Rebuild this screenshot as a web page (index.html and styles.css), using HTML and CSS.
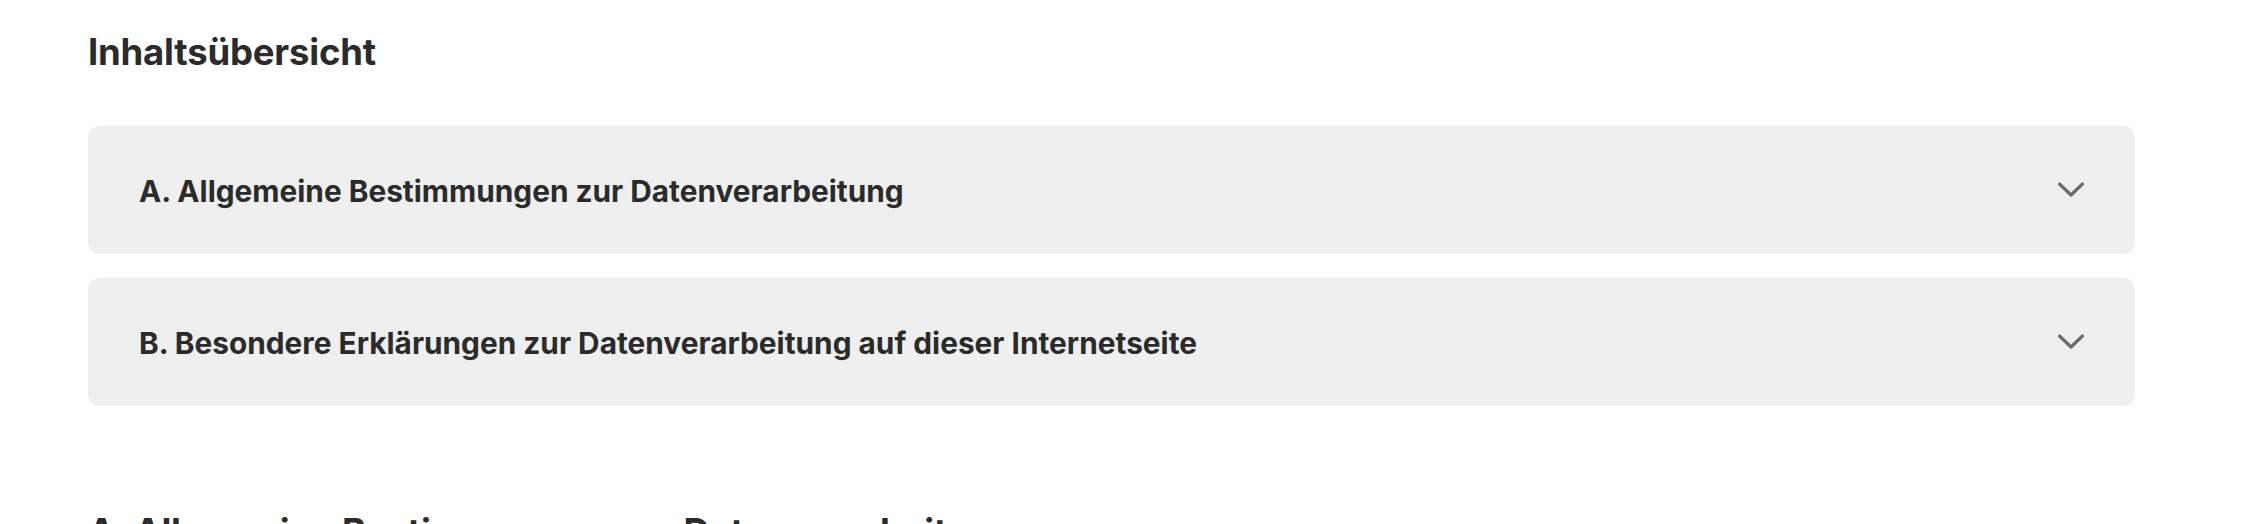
FILE: index.html
```html
<!DOCTYPE html>
<html lang="de">
<head>
<meta charset="utf-8">
<title>Datenschutz</title>
<link rel="stylesheet" href="styles.css">
</head>
<body>
<main class="page">
  <h2 class="toc-title">Inhaltsübersicht</h2>
  <div class="accordion">
    <div class="acc-item">
      <span class="acc-label">A. Allgemeine Bestimmungen zur Datenverarbeitung</span>
      <svg class="acc-icon" viewBox="0 0 32 32" width="32" height="32" aria-hidden="true"><path d="M4.5 10 L16 21 L27.5 10" fill="none" stroke="currentColor" stroke-width="3.2" stroke-linecap="round" stroke-linejoin="round"/></svg>
    </div>
    <div class="acc-item">
      <span class="acc-label">B. Besondere Erklärungen zur Datenverarbeitung auf dieser Internetseite</span>
      <svg class="acc-icon" viewBox="0 0 32 32" width="32" height="32" aria-hidden="true"><path d="M4.5 10 L16 21 L27.5 10" fill="none" stroke="currentColor" stroke-width="3.2" stroke-linecap="round" stroke-linejoin="round"/></svg>
    </div>
  </div>
  <h2 class="section-title">A. Allgemeine Bestimmungen zur Datenverarbeitung</h2>
</main>
</body>
</html>
```

FILE: styles.css
```css
* { box-sizing: border-box; }
html, body { margin: 0; padding: 0; background: #ffffff; }
body {
  font-family: Inter, "Liberation Sans", sans-serif;
  color: #2b2b2b;
  overflow: hidden;
}
.page {
  padding: 30px 107px 0 88px;
}
.toc-title, .section-title {
  margin: 0;
  font-size: 36.5px;
  line-height: 44px;
  font-weight: 700;
  letter-spacing: -0.2px;
}
.accordion {
  margin-top: 52px;
  display: flex;
  flex-direction: column;
  gap: 24px;
}
.acc-item {
  height: 128px;
  background: #efefef;
  border-radius: 12px;
  display: flex;
  align-items: center;
  justify-content: space-between;
  padding: 0 48px 0 51px;
}
.acc-label {
  font-size: 29.8px;
  font-weight: 700;
  line-height: 36px;
  padding-top: 1px;
}
.acc-icon {
  color: #6b6b6b;
  flex: none;
}
.section-title {
  margin-top: 104px;
}
```
